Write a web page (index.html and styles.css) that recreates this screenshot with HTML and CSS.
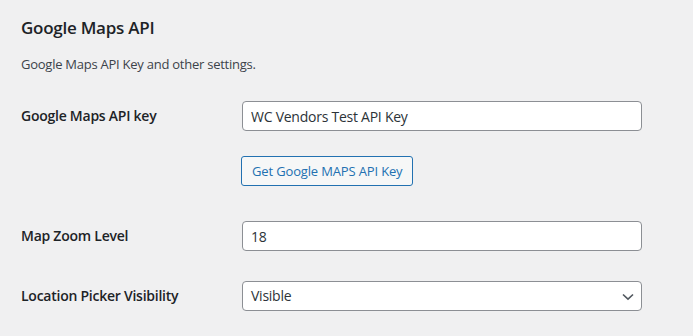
FILE: index.html
```html
<!DOCTYPE html>
<html>
<head>
<meta charset="utf-8">
<link rel="stylesheet" href="styles.css">
</head>
<body>
<div class="wrap">
  <h2 class="title">Google Maps API</h2>
  <p class="desc">Google Maps API Key and other settings.</p>
  <div class="form">
    <div class="row">
      <label class="label">Google Maps API key</label>
      <div class="field">
        <input class="input" type="text" value="WC Vendors Test API Key">
        <div class="btnwrap"><button class="button">Get Google MAPS API Key</button></div>
      </div>
    </div>
    <div class="row">
      <label class="label">Map Zoom Level</label>
      <div class="field">
        <input class="input" type="text" value="18">
      </div>
    </div>
    <div class="row">
      <label class="label">Location Picker Visibility</label>
      <div class="field">
        <div class="select">
          <span class="select-text">Visible</span>
          <svg class="chev" width="12" height="8" viewBox="0 0 12 8"><path d="M1 1.5 L6 6.2 L11 1.5" fill="none" stroke="#50575e" stroke-width="1.6"/></svg>
        </div>
      </div>
    </div>
  </div>
</div>
</body>
</html>
```
FILE: styles.css
```css
* { box-sizing: border-box; }
html, body { margin: 0; padding: 0; }
body {
  background: #f0f0f1;
  color: #1d2327;
  font-family: "Open Sans", "Noto Sans", sans-serif;
  font-size: 13px;
  letter-spacing: -0.25px;
  width: 693px;
  height: 336px;
  overflow: hidden;
}
.wrap { padding: 0 21px; }
.title {
  margin: 17px 0 0;
  font-size: 17px;
  line-height: 22px;
  font-weight: 600;
}
.desc {
  margin: 15px 0 0;
  font-size: 13px;
  line-height: 20px;
  color: #3c434a;
}
.form { margin-top: 12px; }
.row {
  display: grid;
  grid-template-columns: 221px 400px;
}
.label {
  padding-top: 21px;
  font-size: 14px;
  line-height: 18px;
  font-weight: 600;
  color: #1d2327;
}
.field { padding: 15px 0; }
.input, .select {
  display: block;
  width: 400px;
  height: 30px;
  margin: 0;
  padding: 0 8px;
  border: 1px solid #8c8f94;
  border-radius: 4px;
  background: #fff;
  color: #2c3338;
  font-family: inherit;
  font-size: 14px;
  letter-spacing: -0.25px;
  line-height: 28px;
}
.select { position: relative; }
.chev { position: absolute; right: 7px; top: 11px; }
.btnwrap { margin: 25px 0 5px; }
.button {
  display: inline-block;
  height: 30px;
  margin: 0 0 0 -1px;
  padding: 0 10px;
  border: 1px solid #2271b1;
  border-radius: 3px;
  background: #f6f7f7;
  color: #2271b1;
  font-family: inherit;
  font-size: 13px;
  letter-spacing: -0.15px;
  line-height: 28px;
}
```
